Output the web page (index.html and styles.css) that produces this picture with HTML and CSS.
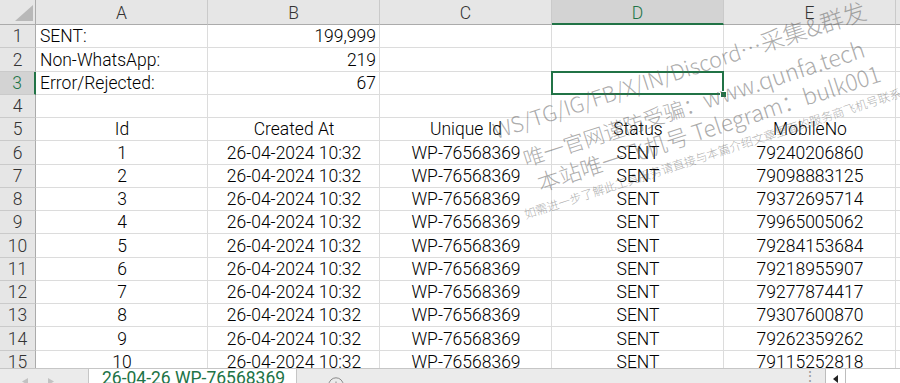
FILE: index.html
```html
<!DOCTYPE html>
<html lang="zh">
<head>
<meta charset="utf-8">
<title>Sheet</title>
<link rel="stylesheet" href="styles.css">
</head>
<body>
<div class="app">
  <div class="sheet">
    <div class="grid">
      <div class="corner"><svg class="tri" width="18" height="16" viewBox="0 0 18 16"><polygon points="18,0 18,16 0,16" fill="#b8b8b8"/></svg></div>
      <div class="ch">A</div><div class="ch">B</div><div class="ch">C</div><div class="ch sel">D</div><div class="ch">E</div><div class="ch"></div>

      <div class="rh">1</div><div class="c l">SENT:</div><div class="c r">199,999</div><div class="c"></div><div class="c"></div><div class="c"></div><div class="c"></div>
      <div class="rh">2</div><div class="c l">Non-WhatsApp:</div><div class="c r">219</div><div class="c"></div><div class="c"></div><div class="c"></div><div class="c"></div>
      <div class="rh sel">3</div><div class="c l">Error/Rejected:</div><div class="c r">67</div><div class="c"></div><div class="c active"></div><div class="c"></div><div class="c"></div>
      <div class="rh">4</div><div class="c"></div><div class="c"></div><div class="c"></div><div class="c"></div><div class="c"></div><div class="c"></div>
      <div class="rh">5</div><div class="c m">Id</div><div class="c m">Created At</div><div class="c m">Unique Id</div><div class="c m">Status</div><div class="c m">MobileNo</div><div class="c"></div>
      <div class="rh">6</div><div class="c m">1</div><div class="c m">26-04-2024 10:32</div><div class="c m">WP-76568369</div><div class="c m">SENT</div><div class="c m">79240206860</div><div class="c"></div>
      <div class="rh">7</div><div class="c m">2</div><div class="c m">26-04-2024 10:32</div><div class="c m">WP-76568369</div><div class="c m">SENT</div><div class="c m">79098883125</div><div class="c"></div>
      <div class="rh">8</div><div class="c m">3</div><div class="c m">26-04-2024 10:32</div><div class="c m">WP-76568369</div><div class="c m">SENT</div><div class="c m">79372695714</div><div class="c"></div>
      <div class="rh">9</div><div class="c m">4</div><div class="c m">26-04-2024 10:32</div><div class="c m">WP-76568369</div><div class="c m">SENT</div><div class="c m">79965005062</div><div class="c"></div>
      <div class="rh">10</div><div class="c m">5</div><div class="c m">26-04-2024 10:32</div><div class="c m">WP-76568369</div><div class="c m">SENT</div><div class="c m">79284153684</div><div class="c"></div>
      <div class="rh">11</div><div class="c m">6</div><div class="c m">26-04-2024 10:32</div><div class="c m">WP-76568369</div><div class="c m">SENT</div><div class="c m">79218955907</div><div class="c"></div>
      <div class="rh">12</div><div class="c m">7</div><div class="c m">26-04-2024 10:32</div><div class="c m">WP-76568369</div><div class="c m">SENT</div><div class="c m">79277874417</div><div class="c"></div>
      <div class="rh">13</div><div class="c m">8</div><div class="c m">26-04-2024 10:32</div><div class="c m">WP-76568369</div><div class="c m">SENT</div><div class="c m">79307600870</div><div class="c"></div>
      <div class="rh">14</div><div class="c m">9</div><div class="c m">26-04-2024 10:32</div><div class="c m">WP-76568369</div><div class="c m">SENT</div><div class="c m">79262359262</div><div class="c"></div>
      <div class="rh">15</div><div class="c m">10</div><div class="c m">26-04-2024 10:32</div><div class="c m">WP-76568369</div><div class="c m">SENT</div><div class="c m">79115252818</div><div class="c"></div>
    </div>
    <div class="wm">
      <span class="w1">WS/TG/IG/FB/X/IN/Discord…<span class="big">采集&amp;群发</span></span>
      <span class="w2">唯一官网谨防受骗：<span class="big">www.qunfa.tech</span></span>
      <span class="w3">本站唯一飞机号 Telegram：bulk001</span>
      <span class="w4">如需进一步了解此工具服务请直接与本篇介绍文章里面的服务商飞机号联系</span>
    </div>
  </div>
  <div class="tabbar">
    <div class="nav">
      <svg width="6" height="7" viewBox="0 0 6 7"><polygon points="6,0 6,7 0,3.5" fill="#c2c2c2"/></svg>
      <svg width="6" height="7" viewBox="0 0 6 7"><polygon points="0,0 0,7 6,3.5" fill="#c2c2c2"/></svg>
    </div>
    <div class="tab">26-04-26 WP-76568369</div>
    <div class="add"><svg width="16" height="16" viewBox="0 0 16 16"><circle cx="8" cy="8" r="7.2" fill="none" stroke="#8a8a8a" stroke-width="1"/><path d="M8 4.5v7M4.5 8h7" stroke="#8a8a8a" stroke-width="1"/></svg></div>
    <div class="spacer"></div>
    <div class="dots">⋮</div>
    <div class="hscroll">
      <div class="sbtn"><svg width="5" height="8" viewBox="0 0 5 8"><polygon points="5,0 5,8 0,4" fill="#222"/></svg></div>
    </div>
  </div>
</div>
</body>
</html>
```

FILE: styles.css
```css
html, body {
  margin: 0;
  padding: 0;
  background: #fff;
}
body {
  font-family: Roboto, "Liberation Sans", Arial, sans-serif;
  font-weight: 300;
}
.app {
  width: 900px;
  height: 383px;
  display: flex;
  flex-direction: column;
  overflow: hidden;
}
.sheet {
  flex: 1;
  position: relative;
  overflow: hidden;
  background: #fff;
}
.grid {
  display: grid;
  grid-template-columns: 36px repeat(5, 172px) 1fr;
  grid-template-rows: 25px;
  grid-auto-rows: 23.25px;
}
.corner, .ch, .rh, .c {
  box-sizing: border-box;
}
.corner {
  background: #e6e6e6;
  border-right: 1px solid #ababab;
  border-bottom: 1px solid #ababab;
  display: flex;
  align-items: flex-end;
  justify-content: flex-end;
  padding: 0 2px 3px 0;
}
.tri {
  display: block;
}
.ch {
  background: #e6e6e6;
  border-right: 1px solid #cacaca;
  border-bottom: 1px solid #ababab;
  display: flex;
  align-items: center;
  justify-content: center;
  font-size: 17.5px;
  line-height: 20px;
  color: #333;
  padding-top: 1px;
}
.ch.sel {
  background: #d3d3d3;
  color: #217346;
  border-bottom: 2px solid #217346;
  padding-top: 2px;
}
.rh {
  background: #e6e6e6;
  border-right: 1px solid #ababab;
  border-bottom: 1px solid #cacaca;
  display: flex;
  align-items: flex-end;
  justify-content: center;
  font-size: 17.5px;
  line-height: 19px;
  color: #333;
  padding-bottom: 1px;
}
.rh.sel {
  background: #d3d3d3;
  color: #217346;
  border-right: 2px solid #217346;
}
.c {
  border-right: 1px solid #dcdcdc;
  border-bottom: 1px solid #dcdcdc;
  display: flex;
  align-items: flex-end;
  padding: 0 3px 1px 4px;
  font-size: 17.5px;
  line-height: 19px;
  color: #000;
  white-space: nowrap;
}
.c.l { justify-content: flex-start; }
.c.r { justify-content: flex-end; }
.c.m { justify-content: center; }
.c.active {
  position: relative;
}
.c.active::before {
  content: "";
  position: absolute;
  left: -1px;
  top: -1px;
  right: -1px;
  bottom: -1px;
  border: 2px solid #217346;
}
.c.active::after {
  content: "";
  position: absolute;
  right: -4px;
  bottom: -4px;
  width: 5px;
  height: 5px;
  background: #217346;
  border: 1px solid #fff;
}

/* watermark overlay */
.wm {
  position: absolute;
  inset: 0;
  pointer-events: none;
  font-family: "Noto Sans CJK SC", "Noto Sans", sans-serif;
  font-weight: 300;
  color: rgba(90, 90, 90, 0.5);
}
.wm > span {
  position: absolute;
  white-space: nowrap;
  line-height: 1;
  transform-origin: 0 100%;
  transform: rotate(-18deg);
}
.wm .big {
  font-size: 1.1em;
}
.w1 {
  left: 497px;
  top: 118px;
  font-size: 21.5px;
}
.w2 {
  left: 527px;
  top: 146px;
  font-size: 21px;
}
.w3 {
  left: 541px;
  top: 171px;
  font-size: 22.5px;
}
.w4 {
  left: 526px;
  top: 208px;
  font-size: 12px;
}

/* sheet tab bar */
.tabbar {
  height: 15px;
  box-sizing: border-box;
  background: #ebebeb;
  border-top: 1px solid #c6c6c6;
  display: flex;
  align-items: flex-start;
  overflow: hidden;
}
.nav {
  width: 88px;
  display: flex;
  gap: 20px;
  padding: 9px 0 0 22px;
  box-sizing: border-box;
}
.nav svg { display: block; }
.tab {
  width: 209px;
  height: 15px;
  margin-top: -1px;
  box-sizing: border-box;
  background: #fff;
  border-left: 1px solid #c6c6c6;
  border-right: 1px solid #c6c6c6;
  padding-left: 13px;
  color: #217346;
  font-size: 17.5px;
  font-weight: 400;
  line-height: 20px;
  white-space: nowrap;
}
.add {
  margin-left: 31px;
  padding-top: 8px;
}
.add svg { display: block; }
.spacer { flex: 1; }
.dots {
  width: 16px;
  color: #9a9a9a;
  font-size: 14px;
  line-height: 14px;
  text-align: center;
  margin-right: 7px;
}
.hscroll {
  width: 75px;
  height: 15px;
  margin-top: -1px;
  background: #fff;
  border-left: 1px solid #bdbdbd;
  border-top: 1px solid #c6c6c6;
  box-sizing: border-box;
  display: flex;
}
.sbtn {
  width: 20px;
  border-right: 1px solid #bdbdbd;
  display: flex;
  justify-content: center;
  padding-top: 6px;
  box-sizing: border-box;
}
.sbtn svg { display: block; }
```
